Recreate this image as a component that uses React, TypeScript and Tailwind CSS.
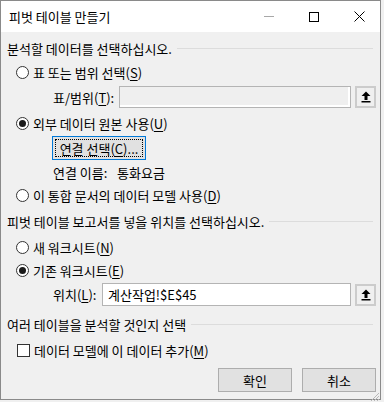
import React from 'react';

const font = { fontFamily: '"Noto Sans CJK KR", "Malgun Gothic", sans-serif' };

function Radio({ checked }: { checked?: boolean }) {
  return (
    <span className="flex h-[13px] w-[13px] shrink-0 items-center justify-center rounded-full border border-[#333] bg-white">
      {checked && <span className="h-[7px] w-[7px] rounded-full bg-[#1a1a1a]" />}
    </span>
  );
}

function Hot({ k }: { k: string }) {
  return (
    <>
      (<span className="underline underline-offset-2">{k}</span>)
    </>
  );
}

function RadioRow({ checked, label, k, className = '' }: { checked?: boolean; label: string; k: string; className?: string }) {
  return (
    <div className={`flex h-4 items-center gap-[4px] pl-[9px] ${className}`}>
      <Radio checked={checked} />
      <span className="leading-none">
        {label}
        <Hot k={k} />
      </span>
    </div>
  );
}

function Heading({ text, className = '' }: { text: string; className?: string }) {
  return (
    <div className={`flex h-4 items-center ${className}`}>
      <span className="whitespace-nowrap leading-none">{text}</span>
      <span className="ml-[5px] mr-[3px] h-px flex-1 bg-[#dcdcdc]" />
    </div>
  );
}

function PickButton() {
  return (
    <div className="flex h-[22px] w-[21px] shrink-0 items-center justify-center border-2 border-[#cccccc] bg-[#f0f0f0]">
      <svg width="10" height="12" viewBox="0 0 10 12">
        <path d="M5 0.5 L9.5 5 L6.5 5 L6.5 9 L3.5 9 L3.5 5 L0.5 5 Z" fill="#000" />
        <rect x="0.5" y="10" width="9" height="1.5" fill="#000" />
      </svg>
    </div>
  );
}

export default function App() {
  return (
    <div className="h-[402px] w-[384px] bg-[#f0f0f0] text-[13px] text-black" style={font}>
      <div className="flex h-[400px] w-[381px] flex-col border border-[#8a8a8a] bg-[#f0f0f0]">
        {/* title bar */}
        <div className="flex h-[31px] shrink-0 items-center bg-white">
          <span className="ml-[8px] leading-none">피벗 테이블 만들기</span>
          <div className="ml-auto flex items-center">
            <span className="mr-[35px] h-px w-[10px] bg-[#a8a8a8]" />
            <span className="mr-[35px] h-[10px] w-[10px] border border-black" />
            <svg className="mr-[15px]" width="11" height="11" viewBox="0 0 11 11">
              <path d="M0.5 0.5 L10.5 10.5 M10.5 0.5 L0.5 10.5" stroke="#000" strokeWidth="1" />
            </svg>
          </div>
        </div>

        <div className="flex flex-col pl-[6px] pr-[4px]">
          <Heading text="분석할 데이터를 선택하십시오." className="mt-[8px]" />
          <RadioRow label="표 또는 범위 선택" k="S" className="mt-[8px]" />

          <div className="mt-[6px] flex h-[22px] items-center">
            <span className="w-[112px] pl-[46px] leading-none">
              표/범위<Hot k="T" />:
            </span>
            <div className="h-[22px] w-[232px] border border-[#b4b4b4] bg-[#efefef] shadow-[inset_-2px_-2px_0_#ffffff]" />
            <div className="ml-[4px]">
              <PickButton />
            </div>
          </div>

          <RadioRow checked label="외부 데이터 원본 사용" k="U" className="mt-[7px]" />

          <div className="mt-[5px] pl-[45px]">
            <div className="flex h-[24px] w-[94px] items-center justify-center border border-[#0078d7] bg-[#e1e1e1] p-[2px]">
              <div className="flex h-full w-full items-center justify-center border border-dotted border-black">
                <span className="leading-none">
                  연결 선택<Hot k="C" />...
                </span>
              </div>
            </div>
          </div>

          <div className="mt-[4px] flex h-4 items-center pl-[46px]">
            <span className="w-[64px] leading-none">연결 이름:</span>
            <span className="leading-none">통화요금</span>
          </div>

          <RadioRow label="이 통합 문서의 데이터 모델 사용" k="D" className="mt-[7px]" />

          <Heading text="피벗 테이블 보고서를 넣을 위치를 선택하십시오." className="mt-[10px]" />
          <RadioRow label="새 워크시트" k="N" className="mt-[10px]" />
          <RadioRow checked label="기존 워크시트" k="E" className="mt-[7px]" />

          <div className="mt-[5px] flex h-[23px] items-center">
            <span className="w-[95px] pl-[46px] leading-none">
              위치<Hot k="L" />:
            </span>
            <div className="flex h-[23px] w-[249px] items-center border border-[#b4b4b4] bg-white pl-[5px]">
              <span className="leading-none">계산작업!$E$45</span>
            </div>
            <div className="ml-[4px]">
              <PickButton />
            </div>
          </div>

          <Heading text="여러 테이블을 분석할 것인지 선택" className="mt-[10px]" />

          <div className="mt-[10px] flex h-4 items-center gap-[4px] pl-[10px]">
            <span className="h-[13px] w-[13px] border border-[#333] bg-white" />
            <span className="leading-none">
              데이터 모델에 이 데이터 추가<Hot k="M" />
            </span>
          </div>

          <div className="mt-[10px] flex justify-end gap-[10px]">
            <button className="h-[24px] w-[74px] border border-[#adadad] bg-[#e1e1e1] leading-none">확인</button>
            <button className="h-[24px] w-[74px] border border-[#adadad] bg-[#e1e1e1] leading-none">취소</button>
          </div>
        </div>

        <div className="mt-auto flex justify-end">
          <svg width="10" height="10" viewBox="0 0 10 10">
            <path d="M9 1 L1 9 M9 4 L4 9 M9 7 L7 9" stroke="#b8b8b8" strokeWidth="1" />
          </svg>
        </div>
      </div>
    </div>
  );
}
